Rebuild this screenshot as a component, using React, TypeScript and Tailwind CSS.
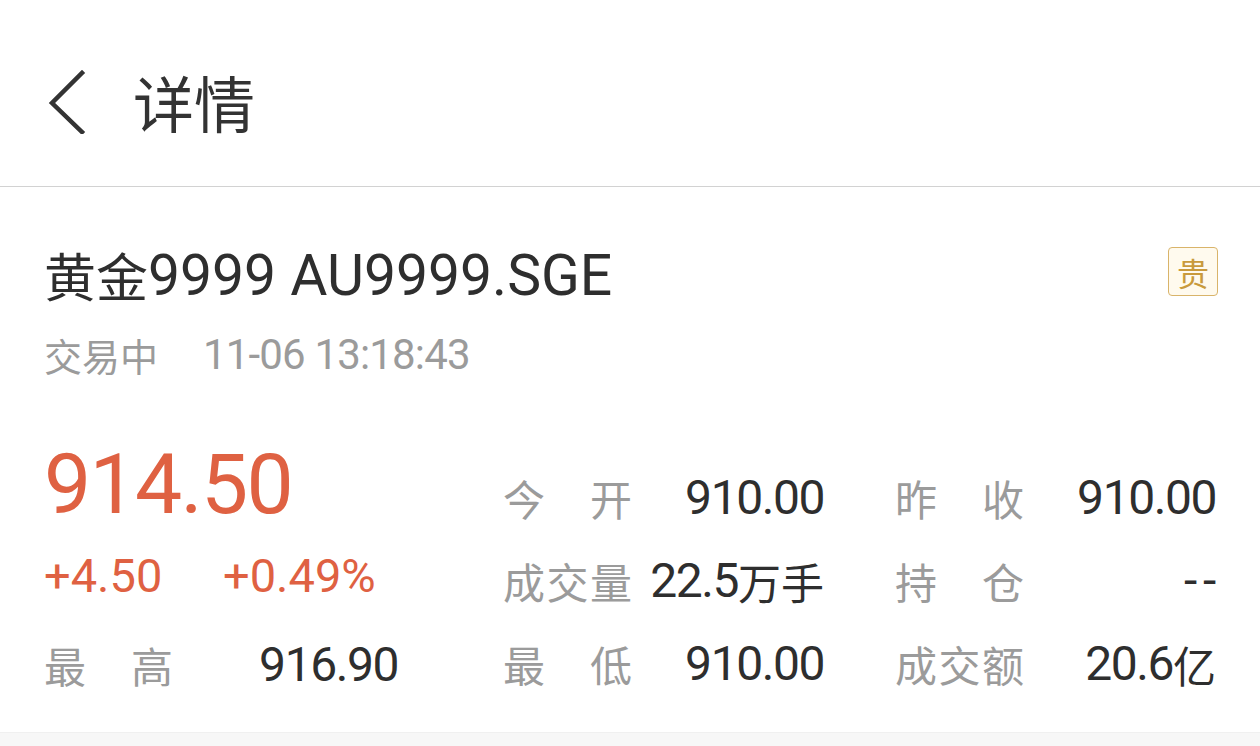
const CJK = "font-['Noto_Sans_CJK_SC',sans-serif]";
const NUM = "font-['Roboto','Noto_Sans_CJK_SC',sans-serif]";

type Stat = { label: string[]; value: string; unit?: string };

const colA: Stat[] = [
  { label: ["今", "开"], value: "910.00" },
  { label: ["成", "交", "量"], value: "22.5", unit: "万手" },
  { label: ["最", "低"], value: "910.00" },
];

const colB: Stat[] = [
  { label: ["昨", "收"], value: "910.00" },
  { label: ["持", "仓"], value: "--" },
  { label: ["成", "交", "额"], value: "20.6", unit: "亿" },
];

function Label({ chars }: { chars: string[] }) {
  return (
    <div className={`flex justify-between w-[129px] text-[42px] leading-none text-[#9b9b9b] ${CJK}`}>
      {chars.map((c, i) => (
        <span key={i}>{c}</span>
      ))}
    </div>
  );
}

function Value({ value, unit }: { value: string; unit?: string }) {
  return (
    <span className="flex items-center text-[#2e2e2e]">
      <span
        className={`text-[48px] leading-none ${value === "--" ? "tracking-[0.12em] mr-[-6px]" : "tracking-[-0.03em]"} ${NUM}`}
      >
        {value}
      </span>
      {unit && <span className={`text-[43px] leading-none ${CJK}`}>{unit}</span>}
    </span>
  );
}

function StatGroup({ rows }: { rows: Stat[] }) {
  return (
    <div className="flex flex-col w-[321px] mt-[23px]">
      {rows.map((r, i) => (
        <div key={i} className={`flex items-center justify-between h-[60px] ${i > 0 ? "mt-[23px]" : ""}`}>
          <Label chars={r.label} />
          <Value value={r.value} unit={r.unit} />
        </div>
      ))}
    </div>
  );
}

export default function App() {
  return (
    <div className="w-[1260px] h-[746px] bg-white flex flex-col overflow-hidden">
      <header className="h-[187px] pt-[16px] flex items-center border-b border-[#d2d2d2] shrink-0">
        <svg width="44" height="66" viewBox="0 0 44 66" className="ml-[44px]" fill="none">
          <path d="M38 5 L8 35 L38 64" stroke="#333" strokeWidth="4.5" strokeLinecap="square" strokeLinejoin="miter" />
        </svg>
        <h1 className={`ml-[45px] text-[61px] leading-none text-[#333] ${CJK}`}>详情</h1>
      </header>

      <section className="pl-[44px] pr-[42px] flex-1">
        <div className="flex justify-between items-start mt-[58px] h-[60px]">
          <div className="flex items-center h-[60px] text-[#2e2e2e]">
            <span className={`text-[52px] leading-none ${CJK}`}>黄金</span>
            <span className={`text-[57px] leading-none ${NUM}`}>9999 AU9999.SGE</span>
          </div>
          <div
            className={`mt-[2px] w-[50px] h-[49px] rounded-[4px] border border-[#d9b46a] bg-[#fffaee] flex items-center justify-center text-[32px] leading-none text-[#c99a3c] ${CJK}`}
          >
            贵
          </div>
        </div>

        <div className="flex items-center h-[44px] mt-[28px] text-[#9b9b9b]">
          <span className={`text-[38px] leading-none ${CJK}`}>交易中</span>
          <span className={`ml-[45px] text-[42px] leading-none tracking-[-0.02em] ${NUM}`}>11-06 13:18:43</span>
        </div>

        <div className="flex items-start mt-[68px]">
          <div className="flex flex-col w-[354px]">
            <div className={`h-[80px] flex items-center text-[84px] leading-none tracking-[-0.02em] text-[#df6142] ${NUM}`}>
              914.50
            </div>
            <div className={`h-[60px] mt-[20px] flex items-center text-[47px] leading-none text-[#df6142] ${NUM}`}>
              <span className="w-[179px]">+4.50</span>
              <span>+0.49%</span>
            </div>
            <div className="h-[60px] mt-[30px] flex items-center justify-between">
              <Label chars={["最", "高"]} />
              <Value value="916.90" />
            </div>
          </div>
          <div className="ml-[105px]">
            <StatGroup rows={colA} />
          </div>
          <div className="ml-[71px]">
            <StatGroup rows={colB} />
          </div>
        </div>
      </section>

      <div className="h-[14px] bg-[#f7f7f7] border-t border-[#f0f0f0] shrink-0" />
    </div>
  );
}
